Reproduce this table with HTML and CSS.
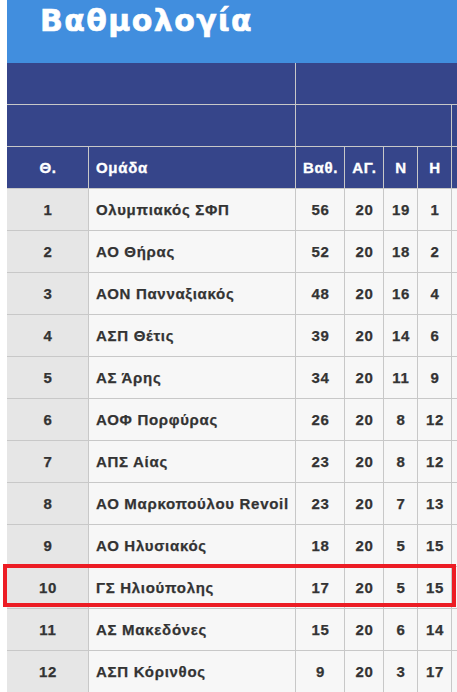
FILE: index.html
```html
<!DOCTYPE html>
<html lang="el">
<head>
<meta charset="utf-8">
<title>Βαθμολογία</title>
<link rel="stylesheet" href="styles.css">
</head>
<body>
<div class="page">
  <h1 class="title">Βαθμολογία</h1>
  <div class="standings">
    <div class="cell head span-a"></div>
    <div class="cell head span-b"></div>
    <div class="cell head span-a"></div>
    <div class="cell head span-c"></div>
    <div class="cell head"></div>

    <div class="cell head">Θ.</div>
    <div class="cell head name">Ομάδα</div>
    <div class="cell head">Βαθ.</div>
    <div class="cell head">ΑΓ.</div>
    <div class="cell head">Ν</div>
    <div class="cell head">Η</div>
    <div class="cell head"></div>

    <div class="cell pos">1</div><div class="cell name">Ολυμπιακός ΣΦΠ</div><div class="cell">56</div><div class="cell">20</div><div class="cell">19</div><div class="cell">1</div><div class="cell"></div>
    <div class="cell pos">2</div><div class="cell name">ΑΟ Θήρας</div><div class="cell">52</div><div class="cell">20</div><div class="cell">18</div><div class="cell">2</div><div class="cell"></div>
    <div class="cell pos">3</div><div class="cell name">ΑΟΝ Πανναξιακός</div><div class="cell">48</div><div class="cell">20</div><div class="cell">16</div><div class="cell">4</div><div class="cell"></div>
    <div class="cell pos">4</div><div class="cell name">ΑΣΠ Θέτις</div><div class="cell">39</div><div class="cell">20</div><div class="cell">14</div><div class="cell">6</div><div class="cell"></div>
    <div class="cell pos">5</div><div class="cell name">ΑΣ Άρης</div><div class="cell">34</div><div class="cell">20</div><div class="cell">11</div><div class="cell">9</div><div class="cell"></div>
    <div class="cell pos">6</div><div class="cell name">ΑΟΦ Πορφύρας</div><div class="cell">26</div><div class="cell">20</div><div class="cell">8</div><div class="cell">12</div><div class="cell"></div>
    <div class="cell pos">7</div><div class="cell name">ΑΠΣ Αίας</div><div class="cell">23</div><div class="cell">20</div><div class="cell">8</div><div class="cell">12</div><div class="cell"></div>
    <div class="cell pos">8</div><div class="cell name">ΑΟ Μαρκοπούλου Revoil</div><div class="cell">23</div><div class="cell">20</div><div class="cell">7</div><div class="cell">13</div><div class="cell"></div>
    <div class="cell pos">9</div><div class="cell name">ΑΟ Ηλυσιακός</div><div class="cell">18</div><div class="cell">20</div><div class="cell">5</div><div class="cell">15</div><div class="cell"></div>
    <div class="cell pos">10</div><div class="cell name">ΓΣ Ηλιούπολης</div><div class="cell">17</div><div class="cell">20</div><div class="cell">5</div><div class="cell">15</div><div class="cell"></div>
    <div class="cell pos">11</div><div class="cell name">ΑΣ Μακεδόνες</div><div class="cell">15</div><div class="cell">20</div><div class="cell">6</div><div class="cell">14</div><div class="cell"></div>
    <div class="cell pos">12</div><div class="cell name">ΑΣΠ Κόρινθος</div><div class="cell">9</div><div class="cell">20</div><div class="cell">3</div><div class="cell">17</div><div class="cell"></div>
  </div>
  <div class="highlight"></div>
</div>
</body>
</html>
```

FILE: styles.css
```css
html, body {
  margin: 0;
  padding: 0;
  overflow: hidden;
  background: #ffffff;
}

.page {
  position: relative;
  width: 457px;
  height: 692px;
  overflow: hidden;
  font-family: "Liberation Sans", Arial, sans-serif;
}

.title {
  margin: 0 0 0 7px;
  height: 63px;
  box-sizing: border-box;
  padding: 1px 0 0 33px;
  background: #418ede;
  color: #ffffff;
  font-family: "DejaVu Sans", "Liberation Sans", sans-serif;
  font-size: 30px;
  line-height: 40px;
  font-weight: bold;
  letter-spacing: 1.4px;
  -webkit-text-stroke: 0.6px #ffffff;
}

.standings {
  margin-left: 7px;
  width: 560px;
  display: grid;
  grid-template-columns: 82px 207px 49px 39px 34px 34px 115px;
  grid-auto-rows: 42px;
}

.cell {
  box-sizing: border-box;
  border-right: 1px solid #c8c8c8;
  border-bottom: 1px solid #c8c8c8;
  background: #f7f7f7;
  color: #333333;
  font-size: 15px;
  font-weight: bold;
  letter-spacing: 0.7px;
  -webkit-text-stroke: 0.25px #333333;
  display: flex;
  align-items: center;
  justify-content: center;
  padding-left: 1px;
}

.cell.pos {
  background: #e6e6e6;
}

.cell.name {
  justify-content: flex-start;
  padding-left: 7px;
}

.cell.head {
  background: #36458a;
  color: #ffffff;
  -webkit-text-stroke: 0.35px #ffffff;
}

.span-a {
  grid-column: span 2;
}

.span-b {
  grid-column: span 5;
}

.span-c {
  grid-column: span 4;
}

.highlight {
  position: absolute;
  left: 3px;
  top: 564px;
  width: 453px;
  height: 43px;
  box-sizing: border-box;
  border: 4px solid #ec1c24;
}
```
